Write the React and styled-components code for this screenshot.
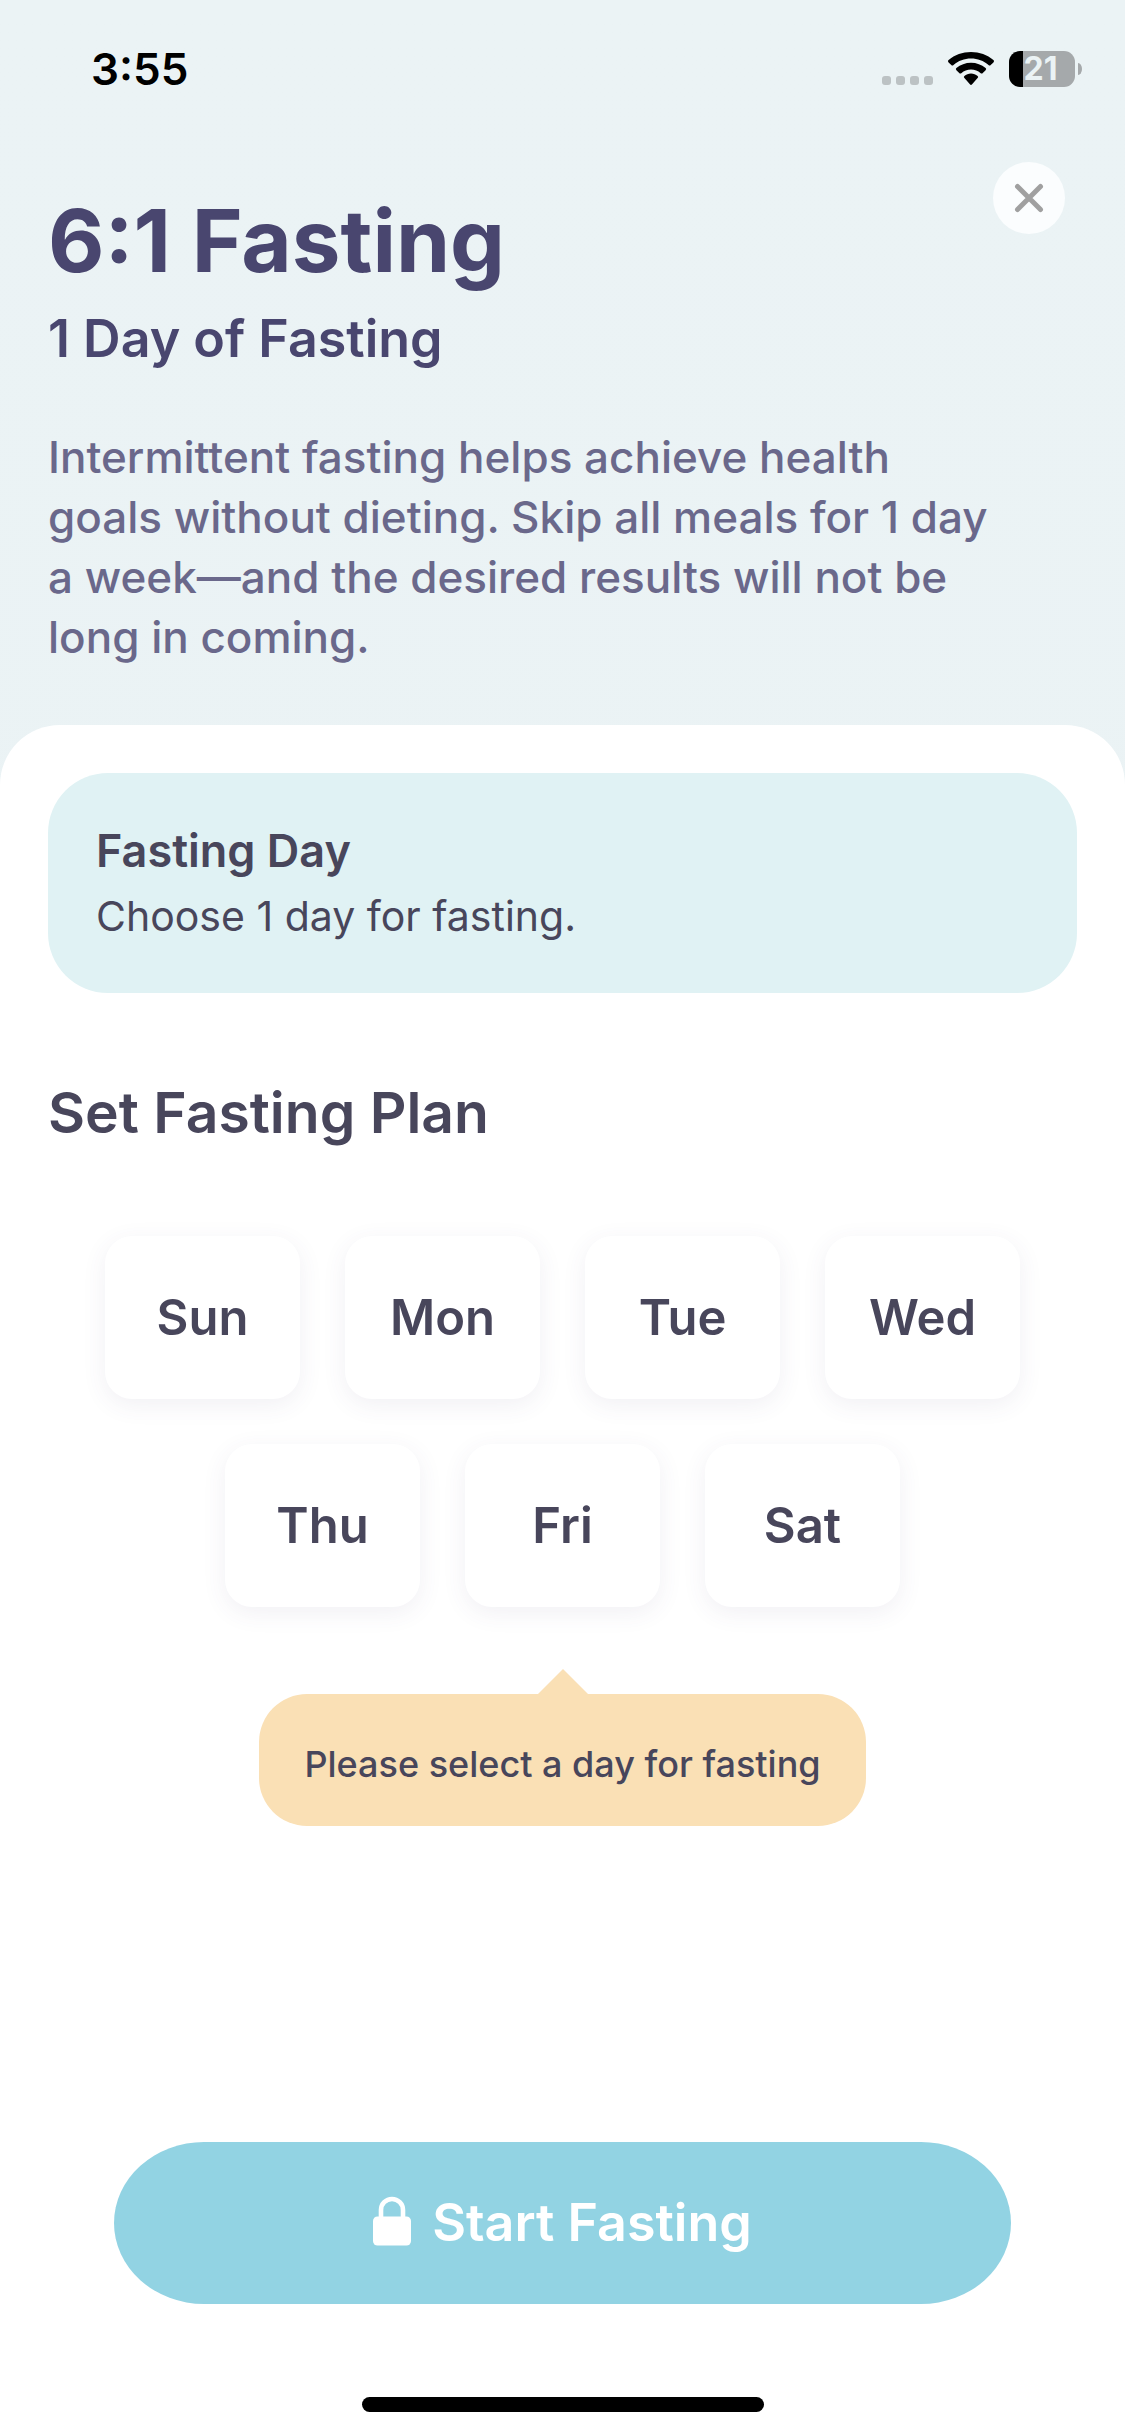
import React, { useState } from "react";
import styled, { createGlobalStyle } from "styled-components";

const GlobalStyle = createGlobalStyle`
  *, *::before, *::after { box-sizing: border-box; }
  body {
    margin: 0;
    background: #ffffff;
    font-family: Inter, "Liberation Sans", sans-serif;
  }
  h1, h2, h3, p { margin: 0; }
  button { font: inherit; border: 0; padding: 0; cursor: pointer; }
`;

const Screen = styled.div`
  min-height: 100vh;
  display: flex;
  flex-direction: column;
  background: linear-gradient(#ebf3f5, #eaf2f4);
`;

const StatusBar = styled.div`
  display: flex;
  align-items: center;
  justify-content: space-between;
  height: 138px;
  padding: 0 43px 0 91px;
`;

const Time = styled.time`
  font-size: 44px;
  line-height: 52px;
  font-weight: 600;
  color: #000000;
`;

const StatusIcons = styled.div`
  display: flex;
  align-items: center;
  gap: 15px;
`;

const Battery = styled.div`
  display: flex;
  align-items: center;
  gap: 3px;
`;

const BatteryBody = styled.div`
  width: 66px;
  padding-right: 3px;
  border-radius: 11px;
  background: linear-gradient(to right, #000000 14px, #a5a9ab 14px);
  color: #ebf3f5;
  font-size: 32px;
  line-height: 36px;
  font-weight: 700;
  text-align: center;
`;

const BatteryCap = styled.div`
  width: 4px;
  height: 12px;
  border-radius: 0 4px 4px 0 / 0 6px 6px 0;
  background: #a5a9ab;
`;

const Header = styled.header`
  display: flex;
  flex-direction: column;
  padding: 24px 48px 0;
`;

const TitleRow = styled.div`
  display: flex;
  justify-content: space-between;
  align-items: flex-start;
  padding-right: 12px;
`;

const Title = styled.h1`
  padding-top: 25px;
  font-size: 87px;
  line-height: 108px;
  font-weight: 700;
  color: #49466f;
`;

const Subtitle = styled.h2`
  padding-top: 12px;
  font-size: 52px;
  line-height: 64px;
  font-weight: 600;
  color: #49466f;
`;

const Description = styled.p`
  max-width: 950px;
  padding: 56px 0 58px;
  font-size: 44px;
  line-height: 60px;
  font-weight: 500;
  color: #6a688b;
`;

const CloseButton = styled.button`
  display: flex;
  align-items: center;
  justify-content: center;
  width: 72px;
  height: 72px;
  border-radius: 50%;
  background: #fbfdfe;
`;

const Sheet = styled.main`
  flex: 1;
  display: flex;
  flex-direction: column;
  padding: 48px 48px 24px;
  border-radius: 60px 60px 0 0;
  background: #ffffff;
`;

const InfoCard = styled.section`
  padding: 46px 48px 44px;
  border-radius: 60px;
  background: #e0f2f4;
  color: #48465b;
`;

const InfoTitle = styled.h3`
  font-size: 45px;
  line-height: 64px;
  font-weight: 600;
`;

const InfoText = styled.p`
  font-size: 41px;
  line-height: 66px;
`;

const SectionTitle = styled.h2`
  padding: 84px 0 87px;
  font-size: 57px;
  line-height: 72px;
  font-weight: 600;
  color: #48465b;
`;

const DayGrid = styled.div`
  display: flex;
  flex-wrap: wrap;
  justify-content: center;
  gap: 45px;
  max-width: 915px;
  width: 100%;
  margin: 0 auto;
`;

const DayButton = styled.button`
  width: 195px;
  height: 163px;
  border-radius: 27px;
  background: ${({ $selected }) => ($selected ? "#92d3e3" : "#ffffff")};
  color: #48465b;
  font-size: 49px;
  line-height: 60px;
  font-weight: 600;
  box-shadow: 0 6px 24px rgba(72, 70, 110, 0.08);
`;

const Tooltip = styled.div`
  display: flex;
  flex-direction: column;
  align-items: center;
  align-self: center;
  margin-top: 62px;
`;

const TooltipArrow = styled.div`
  border: solid transparent;
  border-width: 0 25px 25px;
  border-bottom-color: #fae0b5;
`;

const TooltipText = styled.p`
  padding: 46px 45px 38px;
  border-radius: 48px;
  background: #fae0b5;
  color: #48465b;
  font-size: 36px;
  line-height: 48px;
  font-weight: 500;
`;

const Footer = styled.footer`
  display: flex;
  flex-direction: column;
  align-items: center;
  gap: 93px;
  margin-top: auto;
  padding: 0 66px;
`;

const StartButton = styled.button`
  display: flex;
  align-items: center;
  justify-content: center;
  gap: 21px;
  width: 100%;
  height: 162px;
  border-radius: 90px / 81px;
  background: #92d3e3;
  color: #ffffff;
  font-size: 52px;
  line-height: 64px;
  font-weight: 600;
`;

const HomeIndicator = styled.div`
  width: 402px;
  height: 15px;
  border-radius: 8px;
  background: #000000;
`;

const SignalDots = () => (
  <svg width="51" height="36" viewBox="0 0 51 36" fill="#bcc2c4" aria-hidden="true">
    {[0, 14, 28, 42].map((x) => (
      <rect key={x} x={x} y="25" width="9" height="9" rx="3" />
    ))}
  </svg>
);

const WifiIcon = () => (
  <svg width="46" height="36" viewBox="0 0 46 36" aria-hidden="true">
    <path d="M.6 11.4a1.6 1.6 0 0 1 0-2.3C6.700 3.700 14.500 1 23 1s16.300 2.700 22.400 8.100a1.600 1.600 0 0 1 0 2.300l-2.700 2.700a1.600 1.600 0 0 1-2.200 0C35.700 9.800 29.600 7.500 23 7.500S10.300 9.800 5.500 14.100a1.600 1.600 0 0 1-2.200 0z" />
    <path d="M8.400 19.300a1.500 1.500 0 0 1 0-2.200C12.400 13.600 17.500 11.700 23 11.700s10.600 1.900 14.600 5.400a1.500 1.500 0 0 1 0 2.200l-2.800 2.800a1.600 1.600 0 0 1-2.100.1C30 19.800 26.700 18.500 23 18.500s-7 1.300-9.700 3.700a1.600 1.600 0 0 1-2.100-.1z" />
    <path d="M16.400 27.100a1.400 1.400 0 0 1 0-2.100C18.200 23.400 20.500 22.500 23 22.500s4.800.9 6.600 2.500a1.400 1.400 0 0 1 0 2.100l-5.500 6.200a1.500 1.500 0 0 1-2.200 0z" />
  </svg>
);

const CloseIcon = () => (
  <svg width="30" height="30" viewBox="0 0 30 30" aria-hidden="true">
    <path d="M3.500 3.500l23 23m0-23l-23 23" stroke="#a0a0a0" strokeWidth="5" strokeLinecap="round" />
  </svg>
);

const LockIcon = () => (
  <svg width="38" height="54" viewBox="0 0 38 54" aria-hidden="true">
    <rect y="20.500" width="38" height="29" rx="4.500" fill="#ffffff" />
    <path d="M8 24V14a11 11 0 0 1 22 0v10" fill="none" stroke="#ffffff" strokeWidth="4.600" />
  </svg>
);

const DAYS = ["Sun", "Mon", "Tue", "Wed", "Thu", "Fri", "Sat"];

export default function App() {
  const [day, setDay] = useState(null);

  return (
    <>
      <GlobalStyle />
      <Screen>
        <StatusBar>
          <Time>3:55</Time>
          <StatusIcons>
            <SignalDots />
            <WifiIcon />
            <Battery>
              <BatteryBody>21</BatteryBody>
              <BatteryCap />
            </Battery>
          </StatusIcons>
        </StatusBar>
        <Header>
          <TitleRow>
            <Title>6:1 Fasting</Title>
            <CloseButton type="button" aria-label="Close">
              <CloseIcon />
            </CloseButton>
          </TitleRow>
          <Subtitle>1 Day of Fasting</Subtitle>
          <Description>
            Intermittent fasting helps achieve health goals without dieting. Skip all meals for 1 day
            a week—and the desired results will not be long in coming.
          </Description>
        </Header>
        <Sheet>
          <InfoCard>
            <InfoTitle>Fasting Day</InfoTitle>
            <InfoText>Choose 1 day for fasting.</InfoText>
          </InfoCard>
          <SectionTitle>Set Fasting Plan</SectionTitle>
          <DayGrid role="group" aria-label="Fasting day">
            {DAYS.map((name) => (
              <DayButton
                key={name}
                type="button"
                $selected={name === day}
                aria-pressed={name === day}
                onClick={() => setDay(name)}
              >
                {name}
              </DayButton>
            ))}
          </DayGrid>
          <Tooltip>
            <TooltipArrow />
            <TooltipText>Please select a day for fasting</TooltipText>
          </Tooltip>
          <Footer>
            <StartButton type="button">
              <LockIcon />
              Start Fasting
            </StartButton>
            <HomeIndicator />
          </Footer>
        </Sheet>
      </Screen>
    </>
  );
}
